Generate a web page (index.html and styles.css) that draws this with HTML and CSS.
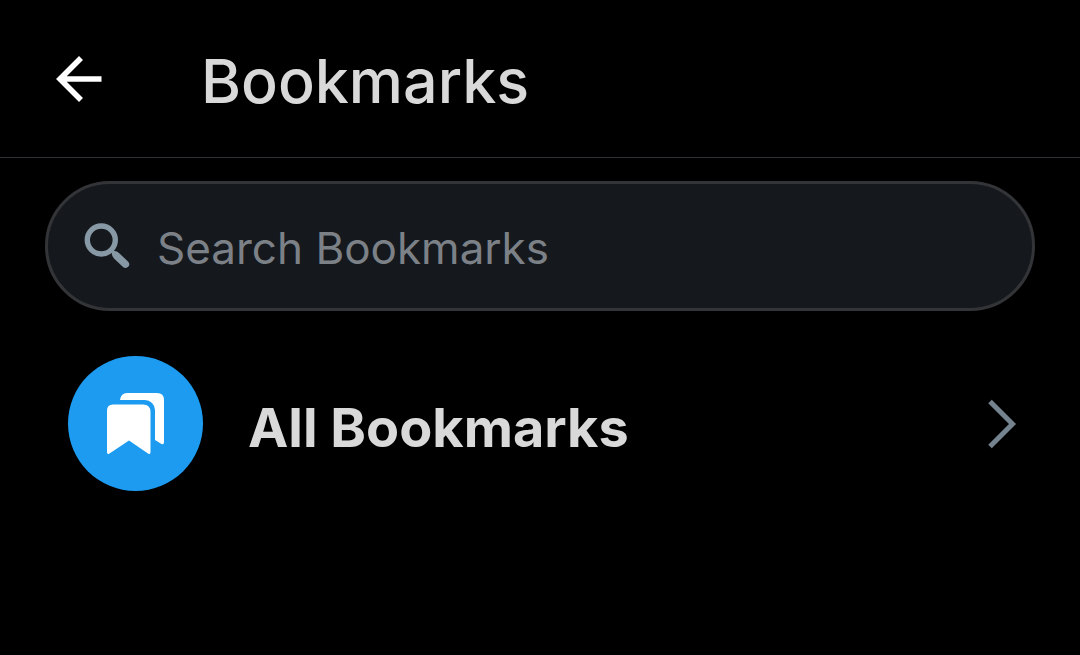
FILE: index.html
```html
<!DOCTYPE html>
<html lang="en">
<head>
<meta charset="utf-8">
<meta name="viewport" content="width=device-width, initial-scale=1">
<title>Bookmarks</title>
<link rel="stylesheet" href="styles.css">
</head>
<body>
<header class="header">
  <button class="back" type="button" aria-label="Back">
    <svg width="48" height="48" viewBox="0 0 48 48" fill="none" stroke="#fff" stroke-width="5.600"><path d="M26 3 5 24l21 21M5 24H46.500"/></svg>
  </button>
  <h1 class="title">Bookmarks</h1>
</header>
<main class="content">
  <label class="search">
    <svg class="search-icon" width="48" height="48" viewBox="0 0 48 48" aria-hidden="true"><circle cx="18.300" cy="18" r="14" fill="none" stroke="#8899a6" stroke-width="5.400"/><path d="M27 29.500 30 26.500 31.500 29Q34 29 36 31L45 39.500Q47.500 42 45.500 44.500 43 47 40 45L31 36.500Q28.500 34 29 31.500Z" fill="#8899a6"/></svg>
    <input class="search-input" type="text" placeholder="Search Bookmarks" aria-label="Search Bookmarks">
  </label>
  <a class="folder" href="#all">
    <span class="badge">
      <svg width="60" height="64" viewBox="1 1 60 64" fill="#fff" aria-hidden="true"><path d="M8 13.500H38Q45.500 13.500 45.500 21V61Q45.500 64 43 62.500L24 49.500 4.500 62.500Q2 64 2 61V19.500Q2 13.500 8 13.500Z"/><path d="M15 9Q16 2 22 2H52Q59 2 59 9V51Q59 54 56.500 53L50 49V19Q50 15 47 12 44 9 40 9Z"/></svg>
    </span>
    <span class="folder-name">All Bookmarks</span>
    <svg width="30" height="50" viewBox="0 0 30 50" fill="none" stroke="#75838f" stroke-width="5" aria-hidden="true"><path d="M2 2.500 24.500 25 2 47.500"/></svg>
  </a>
</main>
</body>
</html>
```
FILE: styles.css
```css
* { box-sizing: border-box; }
body {
  margin: 0;
  min-height: 100vh;
  background: #000;
  color: #d9d9d9;
  font-family: Inter, "Liberation Sans", sans-serif;
}
.header {
  display: flex;
  align-items: center;
  gap: 98px;
  padding: 36px 55px;
  border-bottom: 1px solid #2f3336;
}
.back {
  display: flex;
  padding: 0;
  border: 0;
  background: none;
  cursor: pointer;
}
.title {
  margin: 0;
  padding-top: 5px;
  font-size: 61px;
  font-weight: 500;
  line-height: 80px;
}
.content { padding: 23px 45px; }
.search {
  display: flex;
  align-items: center;
  gap: 26px;
  height: 130px;
  padding: 0 35px;
  border: 3px solid #333437;
  border-radius: 65px;
  background: #15191d;
}
.search-icon { flex: none; }
.search-input {
  flex: 1;
  min-width: 0;
  padding: 4px 0 0;
  border: 0;
  outline: 0;
  background: none;
  color: #d9d9d9;
  font: 400 44px/60px Inter, "Liberation Sans", sans-serif;
}
.search-input::placeholder { color: #7c8188; opacity: 1; }
.folder {
  display: flex;
  align-items: center;
  gap: 45px;
  padding: 45px 17px 45px 23px;
  color: inherit;
  text-decoration: none;
}
.badge {
  display: flex;
  flex: none;
  align-items: center;
  justify-content: center;
  width: 135px;
  height: 135px;
  border-radius: 50%;
  background: #1d9bf0;
}
.folder-name {
  flex: 1;
  padding-top: 8px;
  font-size: 54px;
  font-weight: 700;
  line-height: 64px;
}
```
